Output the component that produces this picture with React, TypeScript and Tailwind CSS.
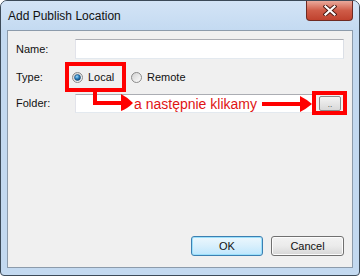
import React from "react";

const Radio = ({ checked }: { checked?: boolean }) => (
  <svg width="11" height="11" viewBox="0 0 11 11" className="shrink-0">
    <defs>
      <linearGradient id="rbg" x1="0" y1="0" x2="1" y2="1">
        <stop offset="0" stopColor="#d0d0d0" />
        <stop offset="1" stopColor="#ffffff" />
      </linearGradient>
      <radialGradient id="rdot" cx="0.4" cy="0.35" r="0.7">
        <stop offset="0" stopColor="#9fd8f8" />
        <stop offset="0.5" stopColor="#2a82c2" />
        <stop offset="1" stopColor="#0d3c66" />
      </radialGradient>
    </defs>
    <circle cx="5.5" cy="5.5" r="5" fill="url(#rbg)" stroke="#8a8a8a" strokeWidth="1" />
    {checked && <circle cx="5.5" cy="5.5" r="3" fill="url(#rdot)" stroke="#1f4f7a" strokeWidth="0.6" />}
  </svg>
);

const App: React.FunctionComponent = () => {
  return (
    <div
      className="w-[360px] h-[276px] flex flex-col border border-[#3c4a58] rounded-t-[7px] rounded-b-[4px] bg-[#c3d9f0] overflow-hidden"
      style={{ fontFamily: '"Liberation Sans", Arial, sans-serif' }}
    >
      {/* Title bar */}
      <div className="h-[29px] flex justify-between bg-gradient-to-b from-[#d3e4f6] to-[#c4daf1]">
        <span className="self-center pl-[7px] text-[12px] text-[#111]">Add Publish Location</span>
        <button className="w-[47px] h-[20px] mr-[6px] flex items-center justify-center rounded-b-[4px] border border-t-0 border-[#6e2a22] bg-gradient-to-b from-[#e9a99c] via-[#cf5c48] to-[#c0422e]">
          <svg width="14" height="11" viewBox="0 0 14 11">
            <path d="M2.5 1.5 L11.5 9.5 M11.5 1.5 L2.5 9.5" stroke="#4a1a14" strokeWidth="4" strokeLinecap="square" />
            <path d="M2.5 1.5 L11.5 9.5 M11.5 1.5 L2.5 9.5" stroke="#ffffff" strokeWidth="2.2" strokeLinecap="square" />
          </svg>
        </button>
      </div>

      {/* Client area */}
      <div className="flex-1 flex px-[6px] pb-[7px]">
        <div className="relative flex-1 flex flex-col border border-[#8c9bab] bg-[#f0f0f0] text-[11px] text-[#111] pt-[8px] pb-[11px]">
          {/* Name */}
          <div className="h-[20px] flex items-center pl-[8px] pr-[8px]">
            <span className="w-[59px]">Name:</span>
            <div className="flex-1 h-[20px] bg-white border border-[#abadb3] border-l-[#e2e3ea] border-r-[#dbdfe6] border-b-[#e3e9ef]" />
          </div>

          {/* Type */}
          <div className="h-[30px] mt-[3px] flex items-center pl-[8px]">
            <span className="w-[49px]">Type:</span>
            <div className="w-[61px] h-[30px] border-[4px] border-[#ff0000] flex items-center pl-[3px] gap-[5px]">
              <Radio checked />
              <span>Local</span>
            </div>
            <div className="ml-[5px] flex items-center gap-[5px]">
              <Radio />
              <span>Remote</span>
            </div>
          </div>

          {/* Folder */}
          <div className="h-[24px] -mt-[1px] flex items-center pl-[8px]">
            <span className="w-[59px]">Folder:</span>
            <div className="w-[238px] h-[19px] bg-white border border-[#abadb3] border-l-[#e2e3ea] border-r-[#dbdfe6] border-b-[#e3e9ef]" />
            <div className="-ml-[1px] w-[35px] h-[24px] border-[4px] border-[#ff0000] flex items-center pl-[3px]">
              <div className="w-[22px] h-[15px] rounded-[2px] border border-[#8a8a8a] bg-gradient-to-b from-[#f4f4f4] to-[#d8d8d8] flex items-end justify-center text-[8px] leading-[10px] text-[#333]">
                ..
              </div>
            </div>
          </div>

          <div className="flex-1" />

          {/* Buttons */}
          <div className="flex justify-end gap-[8px] pr-[8px]">
            <button className="w-[72px] h-[20px] rounded-[3px] border border-[#3c7fb1] bg-gradient-to-b from-[#ecf7fd] via-[#d8effc] to-[#bde6fd] shadow-[inset_0_0_0_1px_#9be0fb] text-[11px] text-[#111]">
              OK
            </button>
            <button className="w-[73px] h-[20px] rounded-[3px] border border-[#707070] bg-gradient-to-b from-[#f2f2f2] via-[#ebebeb] to-[#d6d6d6] shadow-[inset_0_0_0_1px_#fcfcfc] text-[11px] text-[#111]">
              Cancel
            </button>
          </div>

          {/* Annotation overlay */}
          <svg
            className="absolute left-0 top-0 pointer-events-none"
            width="344"
            height="236"
            viewBox="8 31 344 236"
          >
            <rect x="93" y="91" width="4" height="14" fill="#ff0000" />
            <rect x="93" y="101" width="30" height="4" fill="#ff0000" />
            <path d="M121 94 Q127 97 133 103 Q127 109 121 111 Z" fill="#ff0000" />
            <text
              x="134"
              y="109"
              fontSize="14"
              fill="#e01414"
              fontFamily='"Liberation Sans", Arial, sans-serif'
            >
              a następnie klikamy
            </text>
            <rect x="262" y="102" width="40" height="4" fill="#ff0000" />
            <path d="M300 96 Q306 99 312 104 Q306 109 300 112 Z" fill="#ff0000" />
          </svg>
        </div>
      </div>
    </div>
  );
};

export default App;
